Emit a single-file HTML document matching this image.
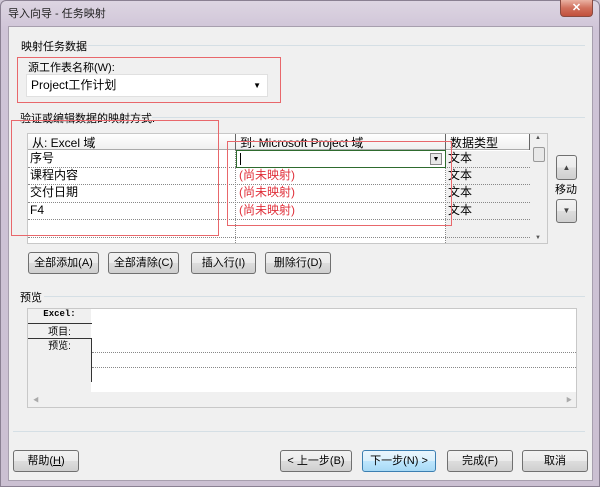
<!DOCTYPE html>
<html><head><meta charset="utf-8"><style>
*{margin:0;padding:0;box-sizing:border-box}
body{width:600px;height:487px;overflow:hidden;background:#cfc6d6;font-family:"Liberation Sans","Noto Sans CJK SC",sans-serif;font-size:11px;color:#000;position:relative}
.a{position:absolute}
.frame{left:0;top:0;width:600px;height:487px;background:linear-gradient(180deg,#ddd5e2 0,#cfc4d7 30px,#cbc0d2 100%);border:1px solid #8a8092;border-radius:6px 6px 0 0}
.client{left:8px;top:26px;width:585px;height:455px;background:#f0f0f0;border:1px solid #a79fae}
.btn{position:absolute;height:22px;border:1px solid #707070;border-radius:3px;background:linear-gradient(#f2f2f2,#ebebeb 50%,#dddddd 51%,#cfcfcf);text-align:center;line-height:20px;font-size:11px}
.red{position:absolute;border:1px solid #e8676b}
.line{position:absolute;height:1px;background:#d5dfe5}
.cell{position:absolute;height:17px;line-height:17px;padding-left:2px;font-size:12px}
.dot{position:absolute;height:0;border-top:1px dotted #888}
</style></head><body>
<div class="a frame"></div>
<div class="a" style="left:8px;top:5px;font-size:11px;color:#222">导入向导 - 任务映射</div>
<div class="a" style="left:560px;top:0;width:33px;height:17px;border:1px solid #8a4a40;border-top:none;border-radius:0 0 4px 4px;background:linear-gradient(#eab2a3,#d0705c 50%,#c2503c);color:#fff;text-align:center;font-size:11px;font-weight:bold;line-height:16px">✕</div>
<div class="a client"></div>

<div class="a" style="left:21px;top:38px">映射任务数据</div>
<div class="line" style="left:88px;top:45px;width:497px"></div>
<div class="red" style="left:17px;top:57px;width:264px;height:46px"></div>
<div class="a" style="left:28px;top:59px">源工作表名称(W):</div>
<div class="a" style="left:26px;top:74px;width:242px;height:23px;background:#fff;border:1px solid #e0e0e0;line-height:21px;padding-left:4px;font-size:12px">Project工作计划<span style="position:absolute;right:6px;top:0;font-size:8px">▼</span></div>

<div class="a" style="left:20px;top:110px">验证或编辑数据的映射方式.</div>
<div class="line" style="left:152px;top:117px;width:433px"></div>

<div class="a" style="left:27px;top:133px;width:521px;height:111px;background:#fff;border:1px solid #c8c8c8"></div>
<div class="a" style="left:28px;top:134px;width:502px;height:16px;background:linear-gradient(#fff,#f0f0f0);border-bottom:1px solid #aaa"></div>
<div class="a" style="left:235px;top:134px;width:1px;height:109px;border-left:1px dotted #888"></div>
<div class="a" style="left:445px;top:134px;width:1px;height:109px;border-left:1px dotted #888"></div>
<div class="a" style="left:235px;top:134px;width:1px;height:16px;background:#666"></div>
<div class="a" style="left:445px;top:134px;width:1px;height:16px;background:#666"></div>
<div class="a" style="left:529px;top:134px;width:1px;height:16px;background:#666"></div>
<div class="a" style="left:446px;top:151px;width:84px;height:92px;background:#f0f0f0"></div>
<div class="cell" style="left:30px;top:135px;line-height:16px">从: Excel 域</div>
<div class="cell" style="left:238px;top:135px;line-height:16px">到: Microsoft Project 域</div>
<div class="cell" style="left:448px;top:135px;line-height:16px">数据类型</div>
<div class="dot" style="left:28px;top:167px;width:502px"></div>
<div class="dot" style="left:28px;top:184px;width:502px"></div>
<div class="dot" style="left:28px;top:202px;width:502px"></div>
<div class="dot" style="left:28px;top:219px;width:502px"></div>
<div class="dot" style="left:28px;top:237px;width:502px"></div>
<div class="cell" style="left:28px;top:150px">序号</div>
<div class="cell" style="left:28px;top:167px">课程内容</div>
<div class="cell" style="left:28px;top:184px">交付日期</div>
<div class="cell" style="left:28px;top:202px">F4</div>
<div class="a" style="left:236px;top:150px;width:210px;height:18px;border:1px solid #2e6b2e;background:#fff"><span style="position:absolute;left:3px;top:2px;width:1px;height:12px;background:#000"></span><span style="position:absolute;right:3px;top:2px;width:12px;height:12px;border:1px solid #888;background:#e8e8e8;font-size:7px;line-height:11px;text-align:center">▼</span></div>
<div class="cell" style="left:237px;top:167px;color:#e0303a">(尚未映射)</div>
<div class="cell" style="left:237px;top:184px;color:#e0303a">(尚未映射)</div>
<div class="cell" style="left:237px;top:202px;color:#e0303a">(尚未映射)</div>
<div class="cell" style="left:446px;top:150px">文本</div>
<div class="cell" style="left:446px;top:167px">文本</div>
<div class="cell" style="left:446px;top:184px">文本</div>
<div class="cell" style="left:446px;top:202px">文本</div>
<div class="a" style="left:530px;top:134px;width:17px;height:109px;background:#f0f0f0"></div>
<div class="a" style="left:535px;top:135px;font-size:6px;color:#555">▲</div>
<div class="a" style="left:535px;top:235px;font-size:6px;color:#555">▼</div>
<div class="a" style="left:533px;top:147px;width:12px;height:15px;border:1px solid #999;border-radius:2px;background:#e8e8e8"></div>
<div class="red" style="left:11px;top:120px;width:208px;height:116px"></div>
<div class="red" style="left:227px;top:141px;width:225px;height:85px"></div>

<div class="btn" style="left:556px;top:155px;width:21px;height:25px;font-size:8px;line-height:23px;color:#444">▲</div>
<div class="a" style="left:555px;top:181px">移动</div>
<div class="btn" style="left:556px;top:199px;width:21px;height:24px;font-size:8px;line-height:22px;color:#444">▼</div>

<div class="btn" style="left:28px;top:252px;width:71px">全部添加(A)</div>
<div class="btn" style="left:108px;top:252px;width:71px">全部清除(C)</div>
<div class="btn" style="left:191px;top:252px;width:65px">插入行(I)</div>
<div class="btn" style="left:265px;top:252px;width:66px">删除行(D)</div>

<div class="a" style="left:20px;top:289px">预览</div>
<div class="line" style="left:44px;top:296px;width:541px"></div>
<div class="a" style="left:27px;top:308px;width:550px;height:100px;background:#fff;border:1px solid #c8c8c8"></div>
<div class="a" style="left:28px;top:309px;width:63px;height:83px;background:#f0f0f0"></div>
<div class="a" style="left:28px;top:309px;width:63px;text-align:center;font-family:'Liberation Mono',monospace;font-size:9px;font-weight:bold">Excel:</div>
<div class="a" style="left:28px;top:323px;width:64px;height:1px;background:#333"></div>
<div class="a" style="left:28px;top:323px;width:63px;text-align:center;font-size:10px">项目:</div>
<div class="a" style="left:28px;top:338px;width:64px;height:1px;background:#333"></div>
<div class="a" style="left:28px;top:337px;width:63px;text-align:center;font-size:10px">预览:</div>
<div class="a" style="left:91px;top:338px;width:1px;height:44px;background:#333"></div>
<div class="dot" style="left:92px;top:352px;width:484px"></div>
<div class="dot" style="left:92px;top:367px;width:484px"></div>
<div class="a" style="left:28px;top:392px;width:548px;height:15px;background:#f0f0f0"></div>
<div class="a" style="left:33px;top:395px;font-size:6px;color:#aaa">◀</div>
<div class="a" style="left:566px;top:395px;font-size:6px;color:#aaa">▶</div>

<div class="line" style="left:13px;top:431px;width:572px"></div>
<div class="btn" style="left:13px;top:450px;width:66px">帮助(<u>H</u>)</div>
<div class="btn" style="left:280px;top:450px;width:72px">&lt; 上一步(B)</div>
<div class="btn" style="left:362px;top:450px;width:74px;border-color:#3c7fb1;background:linear-gradient(#eaf6fd,#d9f0fc 50%,#bee6fd 51%,#a7d9f5)">下一步(N) &gt;</div>
<div class="btn" style="left:447px;top:450px;width:66px">完成(F)</div>
<div class="btn" style="left:522px;top:450px;width:66px">取消</div>
</body></html>
